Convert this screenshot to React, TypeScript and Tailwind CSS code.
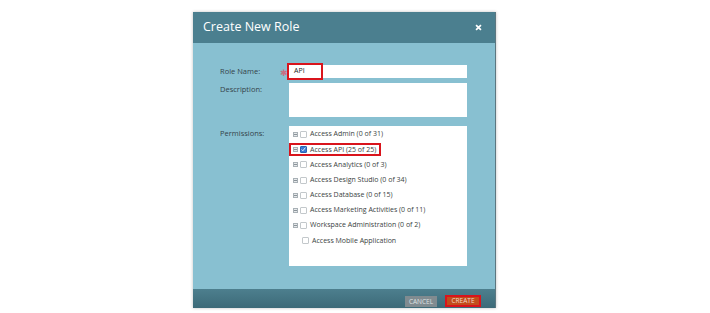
import React from "react";

const perms = [
  { label: "Access Admin (0 of 31)", expand: true },
  { label: "Access API (25 of 25)", expand: true, checked: true, mark: true },
  { label: "Access Analytics (0 of 3)", expand: true },
  { label: "Access Design Studio (0 of 34)", expand: true },
  { label: "Access Database (0 of 15)", expand: true },
  { label: "Access Marketing Activities (0 of 11)", expand: true },
  { label: "Workspace Administration (0 of 2)", expand: true },
  { label: "Access Mobile Application", expand: false },
];

function Expander() {
  return (
    <span className="w-[5px] h-[5px] border border-[#a8b0b5] bg-[#e6e9eb] flex items-center justify-center mr-[2px]">
      <span className="w-[3px] h-px bg-[#8a9399]" />
    </span>
  );
}

function Check({ checked }: { checked?: boolean }) {
  return (
    <span
      className={
        checked
          ? "w-[7px] h-[7px] rounded-[1px] bg-[#3a7bd5] border border-[#2c63b0] flex items-center justify-center"
          : "w-[7px] h-[7px] rounded-[1px] bg-white border border-[#c3c8cb]"
      }
    >
      {checked && (
        <svg viewBox="0 0 8 8" className="w-[5px] h-[5px]">
          <path d="M1 4l2 2 4-5" stroke="white" strokeWidth="1.4" fill="none" />
        </svg>
      )}
    </span>
  );
}

export default function App() {
  return (
    <div
      className="w-[710px] h-[313px] bg-white pt-[12px] pl-[193px]"
      style={{ fontFamily: '"Open Sans", "Liberation Sans", sans-serif' }}
    >
      <div className="w-[303px] h-[296px] flex flex-col border-r border-[#5c7780] shadow-[0_0_3px_rgba(0,0,0,0.25)]">
        {/* header */}
        <div className="h-[31px] bg-[#4b7f8f] flex items-center justify-between pl-[10px] pr-[13px]">
          <span className="text-[12.5px] text-white leading-none">Create New Role</span>
          <svg viewBox="0 0 10 10" className="w-[7px] h-[7px]">
            <path d="M1.5 1.5l7 7M8.5 1.5l-7 7" stroke="white" strokeWidth="2.4" />
          </svg>
        </div>

        {/* body */}
        <div className="flex-1 bg-[#88c0d1] pt-[21px] pl-[27px] pr-[28px] text-[7.5px] text-[#34434a]">
          <div className="flex items-center h-[15px]">
            <span className="w-[60px]">Role Name:</span>
            <span className="w-[9px] text-[#c86f83] text-[9px] leading-none pt-[2px]">✱</span>
            <div className="flex-1 h-[13px] bg-white relative flex items-center pl-[5px] text-[7px] text-[#222]">
              API
              <span className="absolute left-[-2px] top-[-2px] w-[36px] h-[17px] border-2 border-[#d9141c]" />
            </div>
          </div>
          <div className="flex mt-[4px]">
            <span className="w-[69px] pt-[1px]">Description:</span>
            <div className="flex-1 h-[34px] bg-white" />
          </div>
          <div className="flex mt-[9px]">
            <span className="w-[69px] pt-[2px]">Permissions:</span>
            <div className="flex-1 h-[140px] bg-white pt-[1px] pl-[4px] text-[7px] text-[#3a3f42]">
              {perms.map((p) => (
                <div key={p.label} className="h-[15.2px] flex items-center relative">
                  {p.expand ? <Expander /> : <span className="w-[7px] mr-[2px]" />}
                  <Check checked={p.checked} />
                  <span className="ml-[3px] whitespace-nowrap">{p.label}</span>
                  {p.mark && (
                    <span className="absolute left-[-4px] top-[1px] w-[92px] h-[13px] border-2 border-[#d9141c]" />
                  )}
                </div>
              ))}
            </div>
          </div>
        </div>

        {/* footer */}
        <div className="h-[19px] bg-gradient-to-b from-[#4d7f8e] to-[#3c6a78] flex items-end justify-end pr-[14px] pb-[1px] gap-[8px]">
          <div className="w-[32px] h-[11px] bg-[#808b90] text-[6.5px] text-[#dde1e3] flex items-center justify-center">
            CANCEL
          </div>
          <div className="w-[36px] h-[12px] border-2 border-[#d9141c] bg-[#c24c1b] text-[6.5px] text-[#f5d8c8] flex items-center justify-center">
            CREATE
          </div>
        </div>
      </div>
    </div>
  );
}
